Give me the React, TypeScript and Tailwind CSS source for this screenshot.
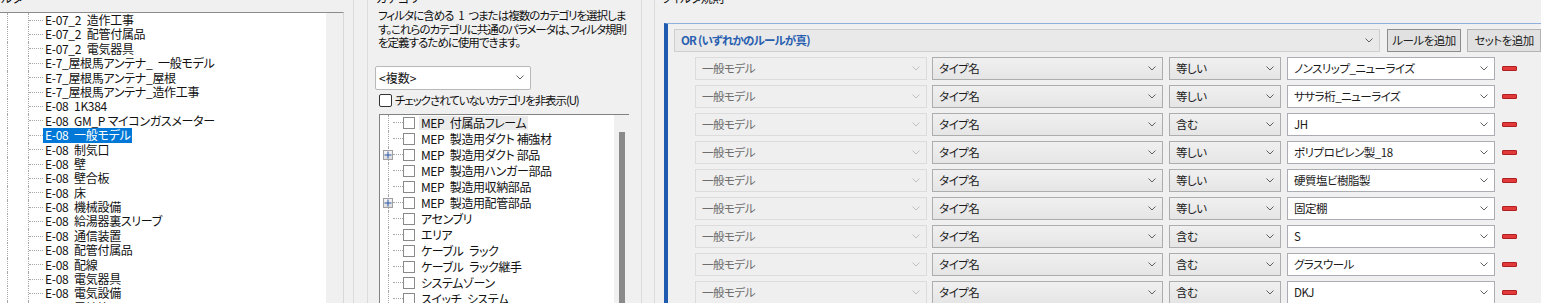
import React from 'react';

const leftItems = [
  'E-07_2 造作工事',
  'E-07_2 配管付属品',
  'E-07_2 電気器具',
  'E-7_屋根馬アンテナ_ 一般モデル',
  'E-7_屋根馬アンテナ_屋根',
  'E-7_屋根馬アンテナ_造作工事',
  'E-08 1K384',
  'E-08 GM_P マイコンガスメーター',
  'E-08 一般モデル',
  'E-08 制気口',
  'E-08 壁',
  'E-08 壁合板',
  'E-08 床',
  'E-08 機械設備',
  'E-08 給湯器裏スリーブ',
  'E-08 通信装置',
  'E-08 配管付属品',
  'E-08 配線',
  'E-08 電気器具',
  'E-08 電気設備',
  'E-08 電線管',
];

const categories: { name: string; expand?: boolean }[] = [
  { name: 'MEP 付属品フレーム' },
  { name: 'MEP 製造用ダクト 補強材' },
  { name: 'MEP 製造用ダクト 部品', expand: true },
  { name: 'MEP 製造用ハンガー部品' },
  { name: 'MEP 製造用収納部品' },
  { name: 'MEP 製造用配管部品', expand: true },
  { name: 'アセンブリ' },
  { name: 'エリア' },
  { name: 'ケーブル ラック' },
  { name: 'ケーブル ラック継手' },
  { name: 'システムゾーン' },
  { name: 'スイッチ システム' },
];

const rules = [
  { op: '等しい', value: 'ノンスリップ_ニューライズ' },
  { op: '等しい', value: 'ササラ桁_ニューライズ' },
  { op: '含む', value: 'JH' },
  { op: '等しい', value: 'ポリプロピレン製_18' },
  { op: '等しい', value: '硬質塩ビ樹脂製' },
  { op: '等しい', value: '固定棚' },
  { op: '含む', value: 'S' },
  { op: '含む', value: 'グラスウール' },
  { op: '含む', value: 'DKJ' },
];

const Chevron = ({ light }: { light?: boolean }) => (
  <svg width="8" height="5" viewBox="0 0 8 5" className="shrink-0">
    <polyline points="0.5,0.5 4,4 7.5,0.5" fill="none" stroke={light ? '#c0c0c0' : '#606060'} strokeWidth="1" />
  </svg>
);

const Combo = ({ text, kind, w }: { text: string; kind: 'disabled' | 'button' | 'edit'; w: string }) => {
  const box =
    kind === 'disabled'
      ? 'bg-[#efefef] border-[#dcdcdc] text-[#6d6d6d]'
      : kind === 'button'
        ? 'bg-gradient-to-b from-[#f0f0f0] to-[#e5e5e5] border-[#adadad] text-[#1a1a1a]'
        : 'bg-white border-[#abadb3] text-[#1a1a1a]';
  return (
    <div className={`${w} h-[23px] border ${box} flex items-center pl-[6px] pr-[6px] shrink-0`}>
      <span className="flex-1 truncate">{text}</span>
      <Chevron light={kind === 'disabled'} />
    </div>
  );
};

export default function App() {
  return (
    <div className="w-[1541px] h-[303px] bg-[#f0f0f0] overflow-hidden flex text-[12px] text-[#111] font-['Noto_Sans_CJK_JP','Noto_Sans',sans-serif] [font-feature-settings:'palt']">
      {/* フィルタ一覧 */}
      <div className="w-[354px] shrink-0 border-r border-[#dcdcdc] flex flex-col min-h-0">
        <div className="h-[12px] shrink-0 overflow-hidden">
          <div className="-mt-[8px] -ml-[18px] leading-[12px]">フィルタ</div>
        </div>
        <div className="flex w-[344px] flex-1 min-h-0 border-t border-r border-t-[#8c8c8c] border-r-[#d8d8d8]">
          <div className="w-[326px] bg-white overflow-hidden tracking-[-0.3px]">
            {leftItems.map((t, i) => (
              <div key={i} className="flex h-[14.4px] leading-[14px]">
                <div className="w-[7px]" />
                <div className="w-[21px] border-l border-dotted border-[#a8a8a8]" />
                <div className="w-[15px] border-l border-dotted border-[#a8a8a8] flex items-center">
                  <div className="w-full border-t border-dotted border-[#a8a8a8]" />
                </div>
                <span
                  className={`px-[2px] whitespace-nowrap ${i === 8 ? 'bg-[#0078d7] text-white' : ''}`}
                >
                  {t.replace(' ', '\u2002')}
                </span>
              </div>
            ))}
          </div>
          <div className="w-[17px] bg-[#f0f0f0]" />
        </div>
      </div>

      {/* カテゴリ */}
      <div className="w-[275px] ml-[13px] shrink-0 border-l border-r border-[#dcdcdc] flex flex-col min-h-0">
        <div className="h-[9px] shrink-0 overflow-hidden">
          <div className="-mt-[8px] ml-[8px] leading-[12px]">カテゴリ</div>
        </div>
        <div className="ml-[10px] shrink-0 leading-[13.5px] whitespace-nowrap text-[11.5px] tracking-[-1px]">
          <div>フィルタに含める{'\u2002'}1{'\u2002'}つまたは複数のカテゴリを選択しま</div>
          <div>す。これらのカテゴリに共通のパラメータは、フィルタ規則</div>
          <div>を定義するために使用できます。</div>
        </div>
        <div className="ml-[7px] mt-[16px] shrink-0 w-[156px] h-[24px] bg-white border border-[#b8b8b8] rounded-[2px] flex items-center pl-[3px] pr-[6px]">
          <span className="flex-1">&lt;複数&gt;</span>
          <Chevron />
        </div>
        <div className="ml-[11px] mt-[3px] shrink-0 flex items-center h-[16px] gap-[3px]">
          <div className="w-[13px] h-[13px] border border-[#333] rounded-[2px] bg-white" />
          <span className="text-[11.5px] tracking-[-1.1px]">チェックされていないカテゴリを非表示(U)</span>
        </div>
        <div className="ml-[11px] mt-[5px] w-[250px] flex-1 min-h-0 flex border-t border-l border-[#828282]">
          <div className="flex-1 bg-white overflow-hidden tracking-[-0.4px]">
            {categories.map((c, i) => (
              <div key={i} className="flex items-center h-[16px] leading-[14px]">
                <div className="w-[3px]" />
                <div className="relative w-[10px] h-full flex items-center justify-center">
                  <div className="absolute left-[5px] top-0 bottom-0 border-l border-dotted border-[#a8a8a8]" />
                  {c.expand && (
                    <div className="relative z-10 w-[10px] h-[10px] border border-[#a0a0a0] bg-gradient-to-b from-[#f4f4f4] to-[#dcdcdc] flex items-center justify-center">
                      <svg width="8" height="8" viewBox="0 0 8 8">
                        <path d="M0.5 4H7.5M4 0.5V7.5" stroke="#2a56a8" strokeWidth="1" />
                      </svg>
                    </div>
                  )}
                </div>
                <div className="w-[10px] border-t border-dotted border-[#a8a8a8]" />
                <div className="w-[12px] h-[12px] border border-[#8a8a8a] bg-white" />
                <span className={`ml-[4px] px-[2px] whitespace-nowrap ${i === 0 ? 'bg-[#ebebeb]' : ''}`}>{c.name.replace(' ', '\u2002')}</span>
              </div>
            ))}
          </div>
          <div className="w-[15px] bg-[#f0f0f0] flex justify-center pt-[17px]">
            <div className="w-[6px] h-full bg-[#8a8a8a]" />
          </div>
        </div>
      </div>

      {/* フィルタ規則 */}
      <div className="flex-1 ml-[12px] border-l border-[#dcdcdc] flex flex-col min-h-0 text-[11.5px] tracking-[-0.5px]">
        <div className="h-[23px] shrink-0 overflow-hidden">
          <div className="-mt-[8px] ml-[7px] leading-[12px] text-[12px]">フィルタ規則</div>
        </div>
        <div className="ml-[9px] flex-1 min-h-0 border-l-[4px] border-l-[#1f5bb0] border-t border-t-[#8fb0dc] pl-[6px] pt-[5px]">
          <div className="flex gap-[7px] h-[23px]">
            <div className="w-[706px] h-[23px] bg-[#e9e9e9] border border-[#cfcfcf] flex items-center pl-[6px] pr-[6px]">
              <span className="flex-1 text-[#2a5fb0] font-semibold tracking-[-0.8px]">OR (いずれかのルールが真)</span>
              <Chevron />
            </div>
            <div className="w-[74px] h-[23px] bg-[#e1e1e1] border border-[#8c8c8c] flex items-center justify-center text-[#222]">
              ルールを追加
            </div>
            <div className="w-[74px] h-[23px] bg-[#e1e1e1] border border-[#b4b4b4] flex items-center justify-center text-[#222] -ml-[1px]">
              セットを追加
            </div>
          </div>
          <div className="mt-[5px] ml-[21px] flex flex-col gap-[5px]">
            {rules.map((r, i) => (
              <div key={i} className="flex items-center">
                <Combo text="一般モデル" kind="disabled" w="w-[232px]" />
                <div className="w-[5px]" />
                <Combo text="タイプ名" kind="button" w="w-[231px]" />
                <div className="w-[6px]" />
                <Combo text={r.op} kind="button" w="w-[112px]" />
                <div className="w-[6px]" />
                <Combo text={r.value} kind="edit" w="w-[208px]" />
                <div className="ml-[7px] w-[15px] h-[5px] bg-[#e23a3a] border border-[#b02020] rounded-[1px]" />
              </div>
            ))}
          </div>
        </div>
      </div>
    </div>
  );
}
